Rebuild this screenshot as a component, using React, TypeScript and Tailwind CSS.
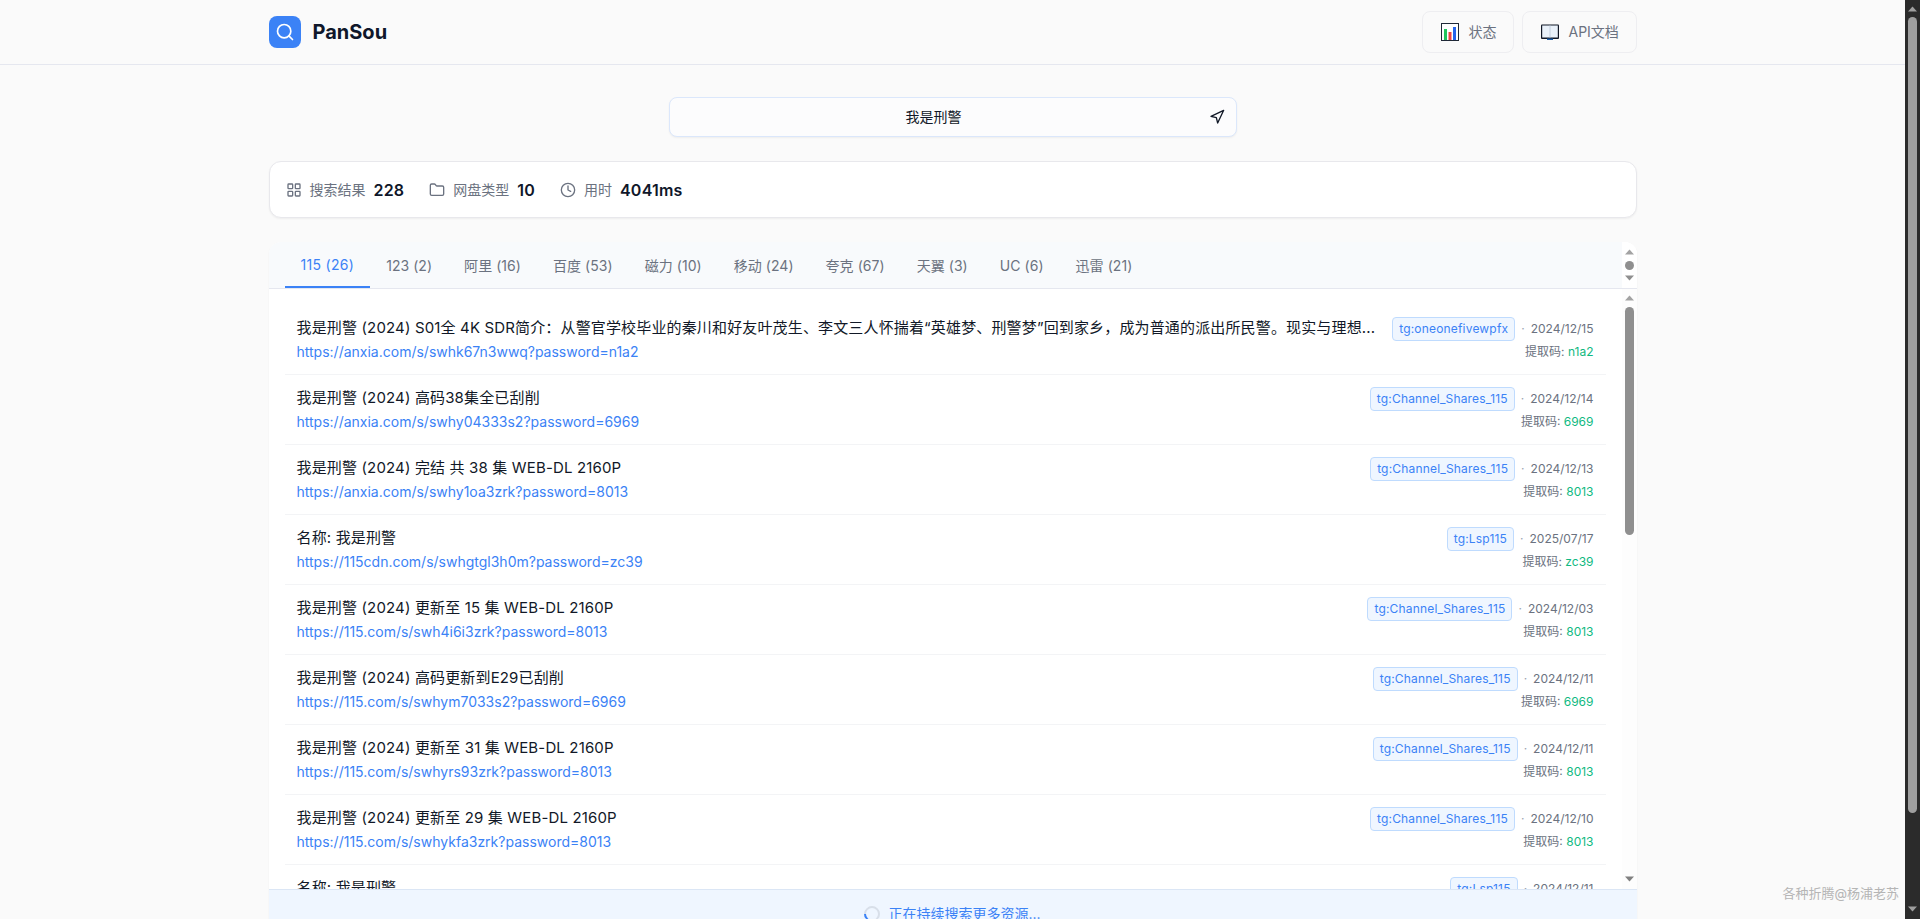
import { Clock, Folder, LayoutGrid, Navigation, Search } from 'lucide-react'

const tabs = ['115 (26)', '123 (2)', '阿里 (16)', '百度 (53)', '磁力 (10)', '移动 (24)', '夸克 (67)', '天翼 (3)', 'UC (6)', '迅雷 (21)']

const rows = [
  { title: '我是刑警 (2024) S01全 4K SDR简介：从警官学校毕业的秦川和好友叶茂生、李文三人怀揣着“英雄梦、刑警梦”回到家乡，成为普通的派出所民警。现实与理想...', url: 'https://anxia.com/s/swhk67n3wwq?password=n1a2', tag: 'tg:oneonefivewpfx', date: '2024/12/15', code: 'n1a2' },
  { title: '我是刑警 (2024) 高码38集全已刮削', url: 'https://anxia.com/s/swhy04333s2?password=6969', tag: 'tg:Channel_Shares_115', date: '2024/12/14', code: '6969' },
  { title: '我是刑警 (2024) 完结 共 38 集 WEB-DL 2160P', url: 'https://anxia.com/s/swhy1oa3zrk?password=8013', tag: 'tg:Channel_Shares_115', date: '2024/12/13', code: '8013' },
  { title: '名称: 我是刑警', url: 'https://115cdn.com/s/swhgtgl3h0m?password=zc39', tag: 'tg:Lsp115', date: '2025/07/17', code: 'zc39' },
  { title: '我是刑警 (2024) 更新至 15 集 WEB-DL 2160P', url: 'https://115.com/s/swh4i6i3zrk?password=8013', tag: 'tg:Channel_Shares_115', date: '2024/12/03', code: '8013' },
  { title: '我是刑警 (2024) 高码更新到E29已刮削', url: 'https://115.com/s/swhym7033s2?password=6969', tag: 'tg:Channel_Shares_115', date: '2024/12/11', code: '6969' },
  { title: '我是刑警 (2024) 更新至 31 集 WEB-DL 2160P', url: 'https://115.com/s/swhyrs93zrk?password=8013', tag: 'tg:Channel_Shares_115', date: '2024/12/11', code: '8013' },
  { title: '我是刑警 (2024) 更新至 29 集 WEB-DL 2160P', url: 'https://115.com/s/swhykfa3zrk?password=8013', tag: 'tg:Channel_Shares_115', date: '2024/12/10', code: '8013' },
  { title: '名称: 我是刑警', url: 'https://115.com/s/swhykfa3zrk?password=8013', tag: 'tg:Lsp115', date: '2024/12/11', code: '8013' },
]

function ChartEmoji() {
  return (
    <svg width="18" height="18" viewBox="0 0 18 18" className="shrink-0">
      <rect x="0.5" y="0.5" width="17" height="17" fill="#fff" stroke="#1f2937" />
      <rect x="3" y="6" width="3" height="11" fill="#22c55e" />
      <rect x="7.5" y="9" width="3" height="8" fill="#ef4444" />
      <rect x="12" y="4" width="3" height="13" fill="#2563eb" />
    </svg>
  )
}

function BookEmoji() {
  return (
    <svg width="18" height="16" viewBox="0 0 18 16" className="shrink-0">
      <rect x="0" y="0.5" width="18" height="14.5" rx="1" fill="#111827" />
      <rect x="1.2" y="1.5" width="15.6" height="12" fill="#eaf2fb" />
      <rect x="8.5" y="1.5" width="1" height="12" fill="#c3d0e0" />
      <rect x="6" y="14.5" width="6" height="1.5" fill="#1e5fa8" />
    </svg>
  )
}

function Arrow({ up, color }: { up?: boolean; color: string }) {
  return (
    <svg width="9" height="6" viewBox="0 0 9 6" className="shrink-0">
      <polygon points={up ? '4.5,0.5 9,5.5 0,5.5' : '0,0.5 9,0.5 4.5,5.5'} fill={color} />
    </svg>
  )
}

function Stat({ icon, label, value }: { icon: React.ReactNode; label: string; value: string }) {
  return (
    <div className="flex items-center">
      {icon}
      <span className="ml-2 text-sm text-[#6b7280]">{label}</span>
      <span className="ml-2 text-base font-semibold tracking-[0.2px] text-[#0f172a]">{value}</span>
    </div>
  )
}

function Row({ row }: { row: (typeof rows)[0] }) {
  return (
    <div className="flex shrink-0 justify-between border-b border-[#f3f4f6] px-3 pt-3 pb-[11px]">
      <div className="min-w-0">
        <div className="h-6 whitespace-nowrap text-[15px] leading-[22px] tracking-[0.15px] text-[#111827]">{row.title}</div>
        <div className="mt-px pb-px text-sm leading-5 text-[#3b82f6]">{row.url}</div>
      </div>
      <div className="flex shrink-0 flex-col items-end">
        <div className="flex h-6 items-center">
          <span className="flex h-6 items-center rounded border border-[#bfdbfe] bg-[#eff6ff] px-1.5 text-xs tracking-[0.015em] text-[#3b82f6]">{row.tag}</span>
          <span className="mx-1.5 text-xs text-[#9ca3af]">·</span>
          <span className="text-xs text-[#6b7280]">{row.date}</span>
        </div>
        <div className="mt-px pb-px text-xs leading-5 text-[#6b7280]">
          提取码: <span className="text-[#10b981]">{row.code}</span>
        </div>
      </div>
    </div>
  )
}

export default function App() {
  return (
    <div className="flex h-screen overflow-hidden bg-[#fafafa] font-['Inter','Noto_Sans_CJK_SC',sans-serif]">
      <div className="relative min-w-0 flex-1">
        <header className="h-[65px] border-b border-[#e5e7ef]">
          <div className="mx-auto flex h-16 max-w-[1400px] items-center justify-between px-4">
            <div className="flex items-center gap-3">
              <div className="flex h-8 w-8 items-center justify-center rounded-lg bg-[#3b82f6]">
                <Search className="h-5 w-5 text-white" />
              </div>
              <span className="text-xl font-bold text-[#0f172a]">PanSou</span>
            </div>
            <div className="flex items-center gap-2">
              <button className="flex h-[42px] w-[92px] items-center gap-2.5 rounded-lg border border-[#eeeef1] pl-[18px] text-sm text-[#6b7280]">
                <ChartEmoji />
                状态
              </button>
              <button className="flex h-[42px] w-[115px] items-center gap-2.5 rounded-lg border border-[#eeeef1] pl-[18px] text-sm text-[#6b7280]">
                <BookEmoji />
                API文档
              </button>
            </div>
          </div>
        </header>

        <main className="mx-auto max-w-[1400px] px-4">
          <div className="flex justify-center pt-8">
            <div className="relative w-[568px]">
              <input
                readOnly
                defaultValue="我是刑警"
                className="h-10 w-full rounded-lg border border-[#dbe7fb] bg-[#fcfcfd] pr-[54px] pb-0.5 pl-4 text-center text-sm text-[#111827] shadow-xs outline-none"
              />
              <Navigation className="absolute top-3 right-3 h-4 w-4 text-[#111827]" />
            </div>
          </div>

          <div className="mt-6 flex h-[57px] items-center gap-[25px] rounded-xl border border-[#e8e8ec] bg-white px-4 shadow-xs">
            <Stat icon={<LayoutGrid className="h-4 w-4 text-[#6b7280]" />} label="搜索结果" value="228" />
            <Stat icon={<Folder className="h-4 w-4 text-[#6b7280]" />} label="网盘类型" value="10" />
            <Stat icon={<Clock className="h-4 w-4 text-[#6b7280]" />} label="用时" value="4041ms" />
          </div>

          <div className="mt-6 overflow-hidden rounded-t-xl bg-white shadow-xs">
            <div className="flex h-[47px] border-b border-[#e5e7ef]">
              <div className="flex flex-1 bg-[#f8fafc] pl-4">
                {tabs.map((t, i) => (
                  <div
                    key={t}
                    className={
                      i === 0
                        ? 'flex items-center border-b-2 border-[#3b82f6] px-4 pt-0.5 text-sm tracking-[0.3px] text-[#3b82f6]'
                        : 'flex items-center px-4 pt-0.5 text-sm tracking-[0.05px] text-[#6b7280]'
                    }
                  >
                    {t}
                  </div>
                ))}
              </div>
              <div className="flex w-[15px] flex-col items-center bg-white pt-[7px]">
                <Arrow up color="#a3a3a3" />
                <div className="mt-[6px] h-[9px] w-[9px] rounded-full bg-[#8f8f8f]" />
                <div className="mt-[5px]">
                  <Arrow color="#8f8f8f" />
                </div>
              </div>
            </div>

            <div className="flex h-[600px]">
              <div className="min-w-0 flex-1 overflow-hidden p-4 pb-0">
                <div className="flex h-full flex-col">
                  {rows.map((r, i) => (
                    <Row key={i} row={r} />
                  ))}
                </div>
              </div>
              <div className="flex w-[15px] shrink-0 flex-col items-center bg-[#fdfdfd] pt-1.5 pb-[7px]">
                <Arrow up color="#a3a3a3" />
                <div className="mt-[6px] h-[228px] w-[9px] rounded-full bg-[#8f8f8f]" />
                <div className="mt-auto">
                  <Arrow color="#808080" />
                </div>
              </div>
            </div>

            <div className="flex h-12 items-center justify-center gap-2 border-t border-[#dbe6f5] bg-[#eff6ff] text-sm text-[#3b82f6]">
              <span className="h-4 w-4 -rotate-45 rounded-full border-2 border-[#d8dfe9] border-l-[#3b82f6]" />
              正在持续搜索更多资源...
            </div>
          </div>
        </main>

        <div className="absolute right-1.5 bottom-4 text-[13px] text-[#b5b5b5]">各种折腾@杨浦老苏</div>
      </div>

      <div className="flex w-[15px] shrink-0 flex-col items-center bg-[#2b2b2b] pt-1.5 pb-[7px]">
        <Arrow up color="#9f9f9f" />
        <div className="mt-[5px] h-[796px] w-[9px] rounded-full bg-[#9f9f9f]" />
        <div className="mt-auto">
          <Arrow color="#9f9f9f" />
        </div>
      </div>
    </div>
  )
}
